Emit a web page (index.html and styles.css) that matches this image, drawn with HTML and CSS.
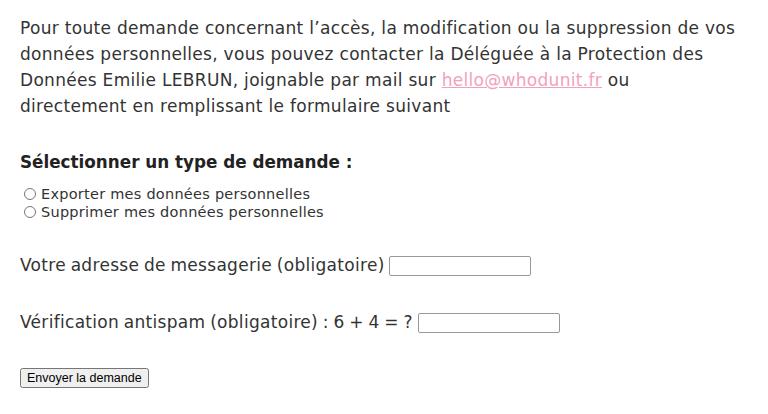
FILE: index.html
```html
<!DOCTYPE html>
<html lang="fr">
<head>
  <meta charset="UTF-8">
  <meta name="viewport" content="width=device-width, initial-scale=1.0">
  <title>Données personnelles</title>
  <link rel="stylesheet" href="styles.css">
</head>
<body>
  <div class="page">
    <p class="intro">Pour toute demande concernant l’accès, la modification ou la suppression de vos données personnelles, vous pouvez contacter la Déléguée à la Protection des Données Emilie LEBRUN, joignable par mail sur <a href="mailto:hello@whodunit.fr">hello@whodunit.fr</a> ou directement en remplissant le formulaire suivant</p>

    <form class="rgpd-form" onsubmit="return false;">
      <h2>Sélectionner un type de demande :</h2>
      <div class="choices">
        <label class="choice"><input type="radio" name="type" value="export"> Exporter mes données personnelles</label>
        <label class="choice"><input type="radio" name="type" value="remove"> Supprimer mes données personnelles</label>
      </div>

      <div class="field">
        <label for="email">Votre adresse de messagerie (obligatoire)</label>
        <input type="email" id="email">
      </div>

      <div class="field">
        <label for="antispam">Vérification antispam (obligatoire) : 6 + 4 = ?</label>
        <input type="text" id="antispam">
      </div>

      <button type="submit">Envoyer la demande</button>
    </form>
  </div>
</body>
</html>
```
FILE: styles.css
```css
body {
  margin: 0;
  font-family: "DejaVu Sans", Arial, sans-serif;
  color: #333;
  background-color: #fff;
}
.page {
  padding: 15px 20px;
}
.intro {
  margin: 0;
  max-width: 718px;
  font-size: 17px;
  line-height: 26px;
  letter-spacing: 0.3px;
}
.intro a {
  color: #f3a0bf;
}
h2 {
  margin: 31px 0 0;
  font-size: 16.8px;
  line-height: 24px;
  font-weight: bold;
  color: #222;
}
.choices {
  margin-top: 11px;
}
.choice {
  display: flex;
  align-items: center;
  gap: 5px;
  font-size: 14.5px;
  line-height: 18px;
  letter-spacing: 0.25px;
}
.choice input {
  margin: 0 0 0 4px;
  width: 12px;
  height: 12px;
}
.field {
  margin-top: 31px;
  font-size: 17px;
  line-height: 26px;
  letter-spacing: 0.3px;
  word-spacing: -1px;
}
.field input {
  box-sizing: border-box;
  width: 142px;
  height: 20px;
  vertical-align: middle;
  border: 1px solid #999;
  border-radius: 2px;
}
button {
  margin-top: 33px;
  font-family: "Liberation Sans", Arial, sans-serif;
  font-size: 12.5px;
  padding: 1px 5px;
}
```
